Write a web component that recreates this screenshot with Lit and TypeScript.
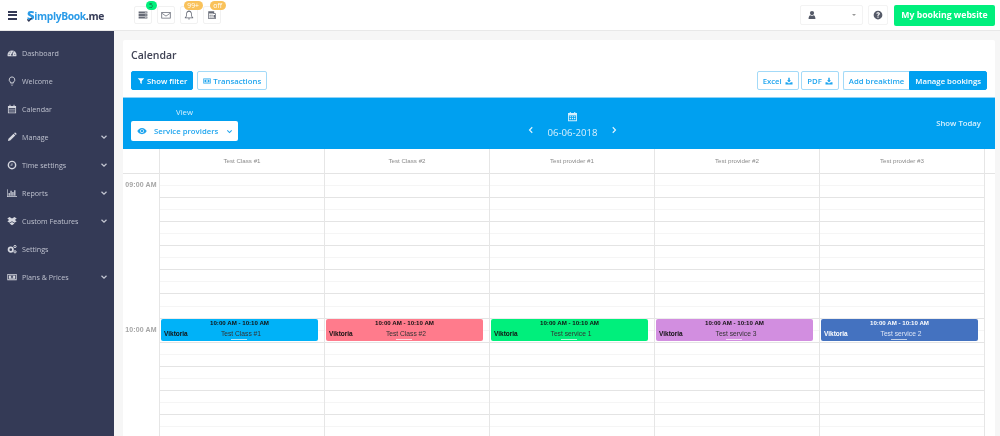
import { LitElement, html, css, svg } from "lit";
import { customElement } from "lit/decorators.js";

const icons: Record<string, any> = {
  dash: svg`<path d="M.8 11a7.200 7.200 0 1 1 14.400 0c0 .9-.1 1.500-.5 2.300H1.300C.9 12.500.8 11.900.8 11z"/><path d="M7.600 10.500 10.300 5.500" stroke="#343a56" stroke-width="1.300"/><circle cx="8" cy="10.800" r="1.400" fill="#343a56"/><circle cx="3.500" cy="9.800" r=".8" fill="#343a56"/><circle cx="5" cy="6.300" r=".8" fill="#343a56"/><circle cx="12.500" cy="9.800" r=".8" fill="#343a56"/>`,
  bulb: svg`<path d="M8 1.500a4.500 4.500 0 0 0-2.500 8.200V11h5V9.700A4.500 4.500 0 0 0 8 1.500z" fill="none" stroke="currentColor" stroke-width="1.500"/><path d="M6 12.300h4v1H6zM6.800 14.200h2.400v1H6.800z"/>`,
  cal: svg`<path d="M1.500 3h2.500V1.300h1.500V3h5V1.300H12V3h2.500v11.800h-13zM2.800 6.500v7h10.400v-7z" fill-rule="evenodd"/><path d="M3.900 7.500h1.900v1.600H3.900zM7 7.500h2v1.600H7zM10.200 7.500h1.900v1.600h-1.900zM3.900 10.300h1.900v1.700H3.900zM7 10.300h2v1.700H7zM10.200 10.300h1.900v1.700h-1.900z"/>`,
  pencil: svg`<path d="M1.500 14.500l.8-3.600 8.200-8.200 2.800 2.800-8.200 8.200zM11.300 1.900l.9-.9c.4-.4 1-.4 1.400 0l1.400 1.400c.4.4.4 1 0 1.400l-.9.900z"/>`,
  clock: svg`<path d="M8 1a7 7 0 1 0 0 14A7 7 0 0 0 8 1zm0 2.300a4.700 4.700 0 1 1 0 9.400 4.700 4.700 0 0 1 0-9.400z" fill-rule="evenodd"/><path d="M7.400 5h1.200v3.700H5.500V7.600h1.900z"/>`,
  chart: svg`<path d="M0 2h1v11h15.500v1.200H0z"/><path d="M2.500 8h2v4.500h-2zM5.500 4.500h2v8h-2zM8.500 6.500h2v6h-2zM11.500 3.500h2v9h-2z"/>`,
  box: svg`<path d="M4 1.500l4 2.400 4-2.400 3.500 2.500-3 2.300 3 2.200-3.500 2.300L8 8.400l-4 2.400L.5 8.500l3-2.200-3-2.300z"/><path d="M8 9.500l4 2.500L8 14.800 4 12z"/>`,
  cogs: svg`<circle cx="6" cy="9" r="3.500" fill="none" stroke="currentColor" stroke-width="2.800"/><circle cx="12.800" cy="4" r="1.800" fill="none" stroke="currentColor" stroke-width="1.600"/><circle cx="12.800" cy="12.500" r="1.800" fill="none" stroke="currentColor" stroke-width="1.600"/>`,
  money: svg`<path d="M.5 3h15v10H.5zM1.800 4.300v7.400h12.400V4.300z" fill-rule="evenodd"/><path d="M3 5.400h10v5.200H3zM8 6a2 2 0 1 0 0 4 2 2 0 0 0 0-4z" fill-rule="evenodd"/><path d="M7.400 7h1.200v2H7.400z"/>`,
  filter: svg`<path d="M1.500 2.500h13L9.500 8v6l-3-2V8z"/>`,
  dl: svg`<path d="M6.500 1.500h3V6.500H12L8 10.800 4 6.500h2.500z"/><path d="M1 10.500h3.500L6.300 12.500h3.400L11.500 10.500H15V15H1z"/>`,
  eye: svg`<path d="M8 3C4.500 3 1.800 5.300.5 8c1.300 2.700 4 5 7.500 5s6.200-2.300 7.500-5C14.200 5.300 11.500 3 8 3zm0 2a3 3 0 1 1 0 6 3 3 0 0 1 0-6z" fill-rule="evenodd"/><circle cx="8" cy="8" r="1.900"/>`,
  user: svg`<circle cx="8" cy="4.800" r="3.400"/><path d="M2.500 14.500c0-4 1.500-6 3-6.300 1.500 1.200 3.500 1.200 5 0 1.500.3 3 2.300 3 6.300z"/>`,
  help: svg`<path d="M8 1a7 7 0 1 0 0 14A7 7 0 0 0 8 1zm.9 11.200H7.100v-1.700h1.800zm1.900-5.400c-.3.600-1 1-1.400 1.300-.4.300-.5.500-.5 1v.300H7.100V9c0-.9.400-1.400.9-1.800.5-.3 1-.6 1-1.100 0-.5-.4-.8-1-.8s-1.100.3-1.400.9L5.200 5.300C5.700 4.300 6.700 3.700 8 3.700c1.700 0 3 .9 3 2.200 0 .3-.1.600-.2.900z" fill-rule="evenodd"/>`,
  server: svg`<path d="M1 2.500h14v3H1zM1 6.500h14v3H1zM1 10.500h14v3H1z"/><path d="M11 3.500h3v1h-3zM11 7.500h3v1h-3zM11 11.500h3v1h-3z" fill="#fff"/>`,
  mail: svg`<path d="M.5 3h15v10.500H.5zM1.800 4.200v8.100h12.400V4.200z" fill-rule="evenodd"/><path d="M1.800 4.600 8 9l6.200-4.400v1.400L8 10.500 1.800 6z"/>`,
  bell: svg`<path d="M8 .5c.5 0 .8.300.8.800 2.300.4 3.700 2.400 3.700 4.900 0 3 .8 4.600 2.200 5.800v1H1.300v-1c1.400-1.200 2.200-2.800 2.200-5.800 0-2.500 1.400-4.500 3.700-4.900C7.200.8 7.500.5 8 .5zM8 2.600c-2.200 0-3.300 1.700-3.300 3.600 0 2.500-.5 4.200-1.400 5.600h9.400c-.9-1.400-1.400-3.100-1.400-5.600C11.300 4.300 10.200 2.600 8 2.600z" fill-rule="evenodd"/><path d="M6.500 13.500h3a1.500 1.500 0 0 1-3 0z"/>`,
  calbar: svg`<path d="M2 2h9.500v3H14v9.500H2zM3.200 5.500v7.800h9.600V6.500H10.300v-1z" fill-rule="evenodd"/><path d="M4 7.500h2v1.800H4zM7 7.500h2v1.800H7zM4 10.300h2v1.800H4zM7 10.300h2v1.800H7zM10.500 8h2.500v4.500h-2.500z"/>`,
  down: svg`<path d="M3 5.500 8 10.500l5-5" fill="none" stroke="currentColor" stroke-width="2.400"/>`,
  left: svg`<path d="M10.500 2.500 5 8l5.500 5.500" fill="none" stroke="currentColor" stroke-width="2.200"/>`,
  right: svg`<path d="M5.500 2.500 11 8l-5.500 5.500" fill="none" stroke="currentColor" stroke-width="2.200"/>`,
};

const icon = (n: string, cls = "") =>
  html`<svg class="ic ${cls}" viewBox="0 0 16 16" fill="currentColor">${icons[n]}</svg>`;

const MENU: [string, string, boolean][] = [
  ["dash", "Dashboard", false],
  ["bulb", "Welcome", false],
  ["cal", "Calendar", false],
  ["pencil", "Manage", true],
  ["clock", "Time settings", true],
  ["chart", "Reports", true],
  ["box", "Custom Features", true],
  ["cogs", "Settings", false],
  ["money", "Plans & Prices", true],
];

const COLS = [
  { name: "Test Class #1", svc: "Test Class #1", cls: "c1" },
  { name: "Test Class #2", svc: "Test Class #2", cls: "c2" },
  { name: "Test provider #1", svc: "Test service 1", cls: "c3" },
  { name: "Test provider #2", svc: "Test service 3", cls: "c4" },
  { name: "Test provider #3", svc: "Test service 2", cls: "c5" },
];

const ROWS = Array.from({ length: 22 }, (_, i) => i);

@customElement("app-root")
export class AppRoot extends LitElement {
  static styles = css`
    :host {
      display: block;
      width: 1000px;
      height: 436px;
      overflow: hidden;
      background: #f6f6f6;
      font-family: "Open Sans", "Noto Sans", sans-serif;
      color: #3f4254;
      filter: blur(0.3px);
    }
    .ic { width: 10px; height: 10px; flex: none; display: block; }
    .top { height: 30px; background: #fff; border-bottom: 1px solid #e8e8e8; display: flex; align-items: center; box-sizing: content-box; }
    .burger { margin-left: 8px; width: 9px; height: 9px; display: flex; flex-direction: column; justify-content: space-between; }
    .burger i { display: block; height: 2px; background: #343a56; }
    .logo { margin-left: 10px; font: 700 10.300px "Open Sans", sans-serif; letter-spacing: -0.35px; color: #2a9be8; display: flex; align-items: baseline; width: 106.500px; white-space: nowrap; position: relative; }
    .logo b { font-size: 13px; font-weight: 800; }
    .logo span { color: #343a56; }
    .check { position: absolute; left: 0; top: 11px; width: 5px; height: 5px; color: #343a56; }
    .tools { display: flex; gap: 5px; }
    .tool { width: 18px; height: 18px; box-sizing: border-box; border: 1px solid #f1f1f1; border-radius: 2px; display: flex; align-items: center; justify-content: center; position: relative; color: #666a76; }
    .tool .ic { width: 10px; height: 10px; }
    .badge { position: absolute; top: -6px; right: -6px; height: 9px; line-height: 9px; border-radius: 5px; font-size: 6.800px; padding: 0 3.500px; background: #f9c25b; color: #fff; white-space: nowrap; }
    .badge.g { background: #00ef7c; color: #14683f; }
    .spacer { flex: 1; }
    .userbox { width: 63px; height: 20px; border: 1px solid #f3f3f3; border-radius: 2px; display: flex; align-items: center; box-sizing: border-box; color: #555a68; justify-content: space-between; padding: 0 6px; }
    .caret { width: 0; height: 0; border: 2px solid transparent; border-top: 2px solid #999; margin-top: 2px; }
    .helpbox { width: 20px; height: 20px; margin-left: 5px; border: 1px solid #f3f3f3; border-radius: 2px; display: flex; align-items: center; justify-content: center; box-sizing: border-box; color: #555a68; }
    .site { margin-left: 6px; margin-right: 5px; width: 101px; height: 21px; background: #00ef7c; border-radius: 2px; color: #fff; font-weight: 700; font-size: 8.700px; display: flex; align-items: center; justify-content: center; white-space: nowrap; }
    .body { display: flex; height: 405px; }
    .side { width: 114px; background: #343a56; flex: none; padding-top: 8px; box-sizing: border-box; }
    .mi { height: 28px; display: flex; align-items: center; color: #bfc2cf; font-size: 7.150px; padding-left: 7px; padding-right: 6px; box-sizing: border-box; white-space: nowrap; }
    .mi .lead { margin-right: 5px; width: 10px; height: 10px; color: #d5d7df; }
    .mi .chev { margin-left: auto; width: 8px; height: 8px; color: #c5c8d3; }
    .main { flex: 1; padding: 9px 5px 0 9px; min-width: 0; }
    .card { background: #fff; height: 100%; border-radius: 2px 2px 0 0; }
    .head { padding: 8px 8px 0; height: 57px; box-sizing: border-box; }
    h1 { margin: 0; font-size: 10.500px; line-height: 14px; font-weight: 600; color: #3f4254; }
    .btns { display: flex; margin-top: 9px; gap: 4px; align-items: center; }
    .btn { height: 19px; box-sizing: border-box; border: 1px solid #a3daf8; border-radius: 2px; background: #fff; color: #1fa5ef; font-size: 7.750px; font-weight: 600; display: flex; align-items: center; gap: 2px; padding: 0 5px; white-space: nowrap; }
    .btn .ic { width: 8px; height: 8px; }
    .btn.fill { background: #00a0f0; border-color: #00a0f0; color: #fff; }
    .btn.dl { gap: 3px; }
    .grow { flex: 1; }
    .tight { margin-left: -1.500px; }
    .seg { display: flex; }
    .seg .btn:first-child { border-radius: 2px 0 0 2px; border-right: 0; }
    .seg .btn:last-child { border-radius: 0 2px 2px 0; }
    .band { height: 52px; background: #00a0f0; color: #fff; display: grid; grid-template-columns: 107px 1fr 80px; padding: 0 8px; border-top: 1px solid #8fd3f7; box-sizing: border-box; }
    .view { display: flex; flex-direction: column; align-items: center; width: 107px; padding-top: 8px; }
    .view small { font-size: 7.750px; line-height: 12px; color: #d7f0fd; }
    .select { margin-top: 3px; width: 107px; height: 20px; background: #fff; border-radius: 2px; color: #1fa5ef; font-size: 7.750px; font-weight: 600; display: flex; align-items: center; padding: 0 5px 0 6px; box-sizing: border-box; white-space: nowrap; }
    .select .ic { width: 10px; height: 10px; }
    .select .t { margin-left: 7px; flex: 1; }
    .select .ch { width: 7px; height: 7px; }
    .date { display: flex; flex-direction: column; align-items: center; padding-top: 13px; }
    .date .calic { width: 11px; height: 11px; color: #d7f0fd; }
    .nav { display: flex; align-items: center; gap: 12px; margin-top: 3px; }
    .nav .ic { width: 8px; height: 8px; margin-top: -7px; color: #e6f6ff; }
    .nav span { font-size: 9.650px; line-height: 16px; color: #d7f0fd; }
    .today { justify-self: end; align-self: center; font-size: 7.750px; font-weight: 600; color: #d7f0fd; margin-right: 6px; margin-top: -1px; }
    .cal { height: 296px; overflow: hidden; font-family: "Liberation Sans", Arial, sans-serif; display: flex; }
    .tcol { width: 36px; flex: none; display: flex; flex-direction: column; }
    .hcell { height: 25px; box-sizing: border-box; border-bottom: 1px solid #e4e4e4; padding-bottom: 2px; font-size: 6.200px; color: #8a8a8a; display: flex; align-items: center; justify-content: center; white-space: nowrap; flex: none; }
    .time { font-size: 7px; font-weight: 700; color: #a5a5a5; text-align: center; height: 144.600px; padding-top: 7px; box-sizing: border-box; white-space: nowrap; flex: none; letter-spacing: .1px; }
    .col { width: 165px; flex: none; border-left: 1px solid #e6e6e6; box-sizing: border-box; position: relative; }
    .row { height: 12.050px; box-sizing: border-box; border-bottom: 1px solid #f5f5f5; }
    .row.s { border-bottom-color: #e4e4e4; }
    .gutter { flex: 1; border-left: 1px solid #e6e6e6; background: #fff; }
    .gutter .g { height: 25px; box-sizing: border-box; border-bottom: 1px solid #e4e4e4; }
    .ev { position: absolute; left: 1px; width: 157px; top: 169.500px; height: 22.500px; border-radius: 2px; box-shadow: 0 0 0 .5px rgba(255,255,255,.6); color: #111; overflow: hidden; }
    .ev .tm { position: absolute; top: 0.500px; left: 0; right: 0; text-align: center; font-weight: 700; font-size: 6.150px; line-height: 8px; white-space: nowrap; }
    .ev .who { position: absolute; left: 3px; top: 10px; font-weight: 700; line-height: 9px; font-size: 6.500px; }
    .ev .svc { position: absolute; left: 3px; right: 0; top: 10px; text-align: center; line-height: 9px; font-size: 6.700px; color: #333; }
    .ev .grip { position: absolute; left: 70px; width: 16px; bottom: 1px; height: 1.500px; background: rgba(255,255,255,.65); }
    .c1 { background: #00b2f8; }
    .c2 { background: #ff7b8c; }
    .c3 { background: #00ef7c; }
    .c4 { background: #d28ee0; }
    .c5 { background: #4472c0; color: #fff; }
    .c5 .svc { color: #dde6f6; }
  `;

  render() {
    return html`
      <div class="top">
        <div class="burger"><i></i><i></i><i></i></div>
        <div class="logo"><b>S</b>implyBook<span>.me</span>
          <svg class="check" viewBox="0 0 16 16" fill="none" stroke="currentColor" stroke-width="4"><path d="M1 8l5 5 9-10"/></svg>
        </div>
        <div class="tools">
          <div class="tool">${icon("server")}<span class="badge g">5</span></div>
          <div class="tool">${icon("mail")}</div>
          <div class="tool">${icon("bell")}<span class="badge">99+</span></div>
          <div class="tool">${icon("calbar")}<span class="badge">off</span></div>
        </div>
        <div class="spacer"></div>
        <div class="userbox">${icon("user")}<i class="caret"></i></div>
        <div class="helpbox">${icon("help")}</div>
        <div class="site">My booking website</div>
      </div>
      <div class="body">
        <nav class="side">
          ${MENU.map(([i, t, c]) => html`<div class="mi">${icon(i, "lead")}<span>${t}</span>${c ? icon("down", "chev") : ""}</div>`)}
        </nav>
        <div class="main">
          <div class="card">
            <div class="head">
              <h1>Calendar</h1>
              <div class="btns">
                <div class="btn fill">${icon("filter")}Show filter</div>
                <div class="btn">${icon("money")}Transactions</div>
                <div class="grow"></div>
                <div class="btn dl">Excel ${icon("dl")}</div>
                <div class="btn dl tight">PDF ${icon("dl")}</div>
                <div class="seg">
                  <div class="btn">Add breaktime</div>
                  <div class="btn fill">Manage bookings</div>
                </div>
              </div>
            </div>
            <div class="band">
              <div class="view">
                <small>View</small>
                <div class="select">${icon("eye")}<span class="t">Service providers</span>${icon("down", "ch")}</div>
              </div>
              <div class="date">
                ${icon("cal", "calic")}
                <div class="nav">${icon("left")}<span>06-06-2018</span>${icon("right")}</div>
              </div>
              <div class="today">Show Today</div>
            </div>
            <div class="cal">
              <div class="tcol">
                <div class="hcell"></div>
                <div class="time">09:00 AM</div>
                <div class="time">10:00 AM</div>
              </div>
              ${COLS.map(
                (c) => html`<div class="col">
                  <div class="hcell">${c.name}</div>
                  ${ROWS.map((r) => html`<div class="row ${r % 2 ? "s" : ""}"></div>`)}
                  <div class="ev ${c.cls}">
                    <div class="tm">10:00 AM - 10:10 AM</div>
                    <div class="who">Viktoria</div>
                    <div class="svc">${c.svc}</div>
                    <div class="grip"></div>
                  </div>
                </div>`
              )}
              <div class="gutter"><div class="g"></div></div>
            </div>
          </div>
        </div>
      </div>
    `;
  }
}
